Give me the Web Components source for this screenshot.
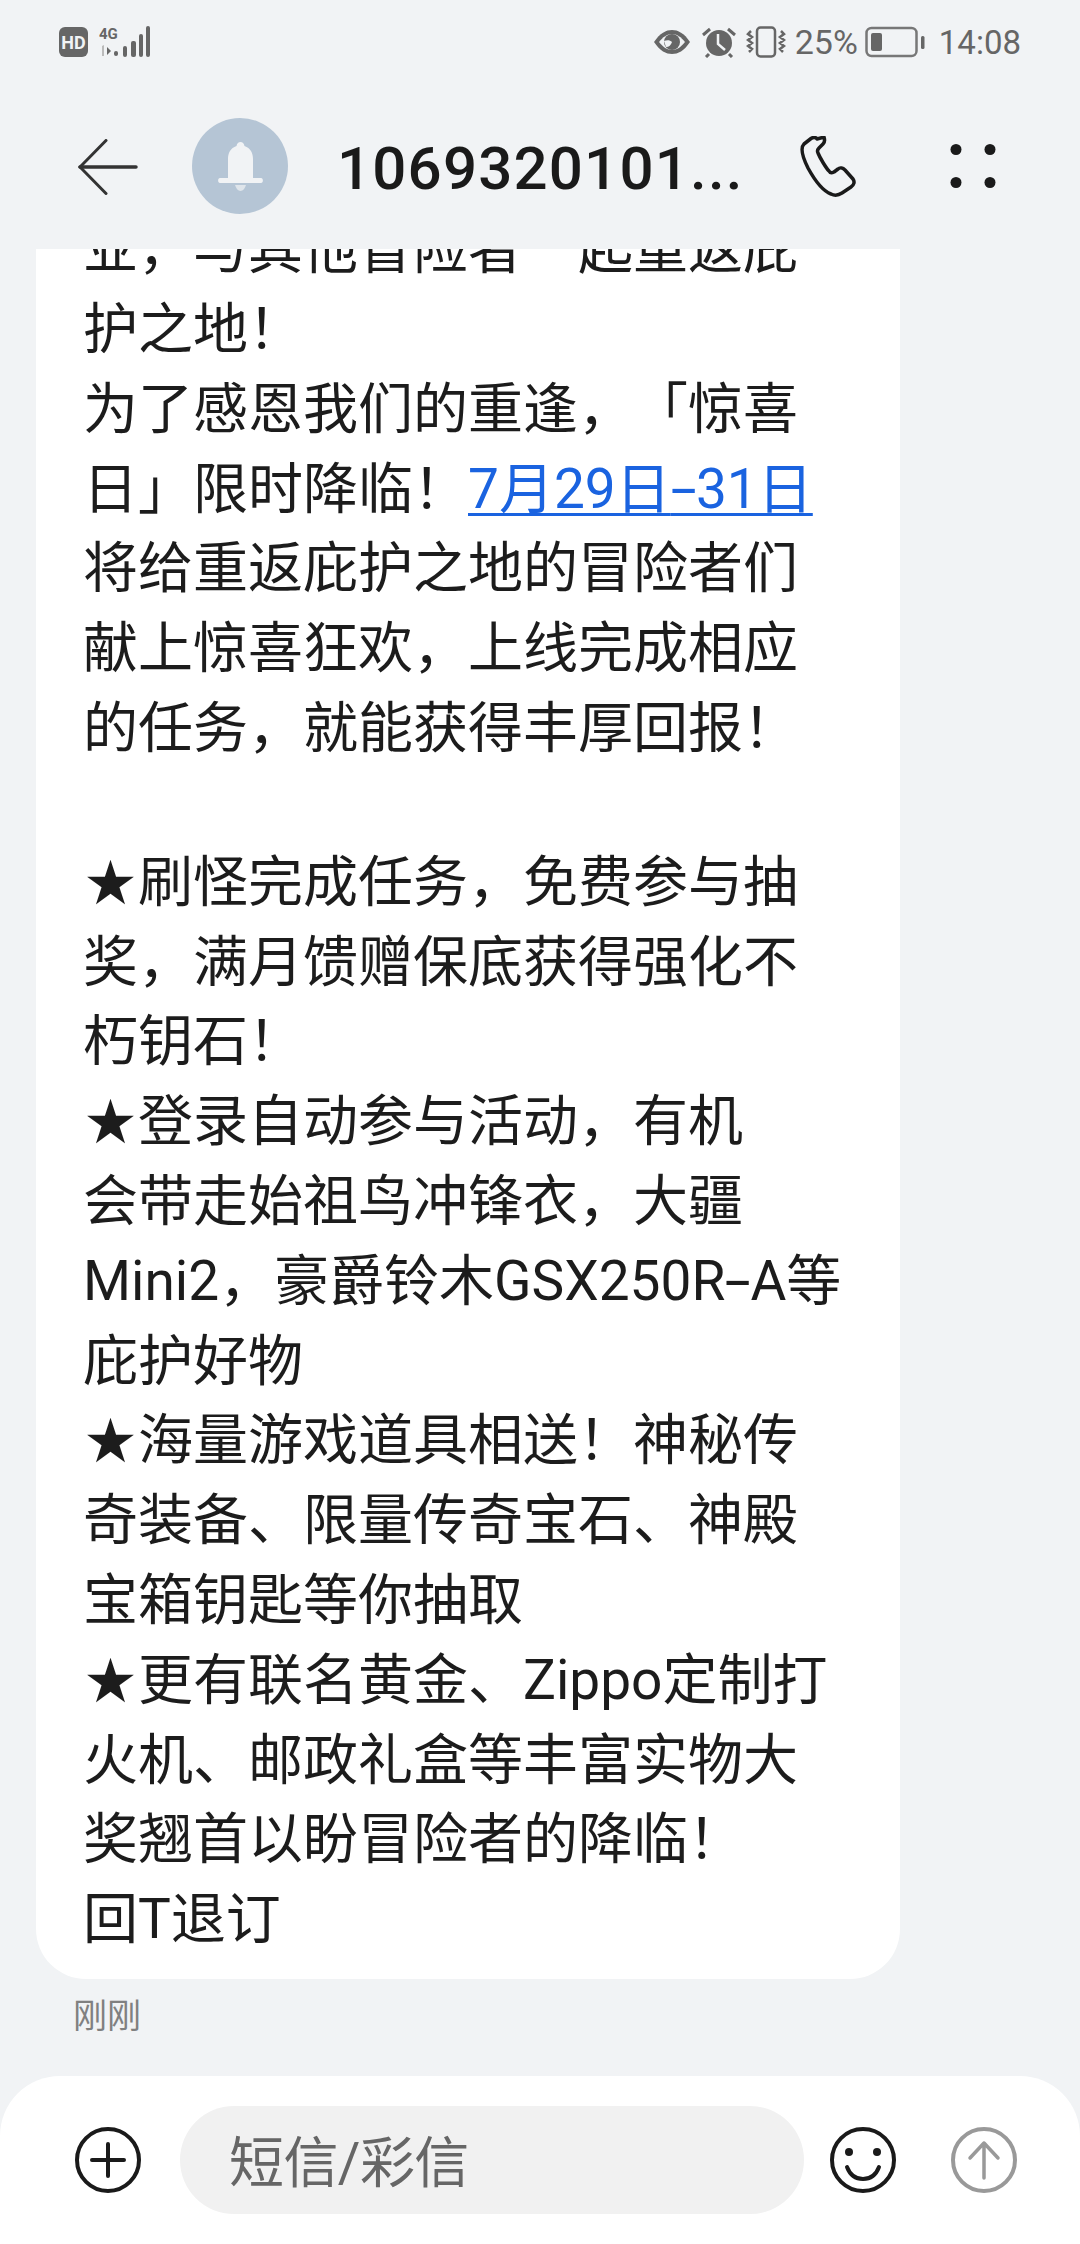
<!DOCTYPE html>
<html lang="zh">
<head>
<meta charset="utf-8">
<style>
  html, body { margin: 0; padding: 0; }
  body { width: 1080px; height: 2244px; background: #f1f3f5; overflow: hidden; }
  #app { display: flex; flex-direction: column; height: 2244px; }
  sms-bubble a { color: #1a63e0; text-decoration: underline; text-underline-offset: 5px; text-decoration-thickness: 3px; }
  sms-bubble .blank { display: block; height: 74px; }
  sms-bubble .star { display: inline-block; width: 55px; text-align: center; font-size: 50px; line-height: 1; }
  sms-bubble .dash { display: inline-block; margin: 0 5px; transform: scaleX(1.7); }
  sms-bubble a .dash { text-decoration: inherit; text-underline-offset: 5px; text-decoration-thickness: 3px; }
</style>
</head>
<body>
<div id="app">
  <status-bar></status-bar>
  <chat-header title="1069320101..."></chat-header>
  <message-list>
    <sms-bubble>
      业，与其他冒险者一起重返庇<br>
      护之地！<br>
      为了感恩我们的重逢，「惊喜<br>
      日」限时降临！<a>7月29日<span class="dash">-</span>31日</a><br>
      将给重返庇护之地的冒险者们<br>
      献上惊喜狂欢，上线完成相应<br>
      的任务，就能获得丰厚回报！<br>
      <span class="blank"></span>
      <span class="star">★</span>刷怪完成任务，免费参与抽<br>
      奖，满月馈赠保底获得强化不<br>
      朽钥石！<br>
      <span class="star">★</span>登录自动参与活动，有机<br>
      会带走始祖鸟冲锋衣，大疆<br>
      Mini2，豪爵铃木GSX250R<span class="dash">-</span>A等<br>
      庇护好物<br>
      <span class="star">★</span>海量游戏道具相送！神秘传<br>
      奇装备、限量传奇宝石、神殿<br>
      宝箱钥匙等你抽取<br>
      <span class="star">★</span>更有联名黄金、Zippo定制打<br>
      火机、邮政礼盒等丰富实物大<br>
      奖翘首以盼冒险者的降临！<br>
      回T退订
    </sms-bubble>
    <time-stamp>刚刚</time-stamp>
  </message-list>
  <compose-bar placeholder="短信/彩信"></compose-bar>
</div>

<script>
const FONT = `Roboto, "Noto Sans CJK SC", sans-serif`;

class StatusBar extends HTMLElement {
  constructor() {
    super();
    const shadowRoot = this.attachShadow({mode: 'open'});
    shadowRoot.innerHTML = `
      <style>
        :host {
          display: flex;
          justify-content: space-between;
          align-items: center;
          height: 84px;
          padding: 0 59px 0 59px;
          color: #666;
          font-family: ${FONT};
          flex: none;
        }
        .left, .right { display: flex; align-items: center; }
        .left { gap: 11px; }
        .right { font-size: 34px; }
        .time { font-size: 33px; }
        svg { display: block; }
      </style>
      <div class="left">
        <svg width="29" height="30" viewBox="0 0 29 30">
          <rect width="29" height="30" rx="6" fill="#666"/>
          <text x="14.5" y="21.5" text-anchor="middle" font-family="Roboto" font-weight="700" font-size="18" fill="#f1f3f5">HD</text>
        </svg>
        <svg width="52" height="32" viewBox="0 0 52 32">
          <text x="0" y="13" font-family="Roboto" font-weight="700" font-size="15" fill="#666">4G</text>
          <path d="M3 20l2-1v11H3z" fill="#bbb"/>
          <path d="M8 21l4 4-4 4z" fill="#666"/>
          <g fill="#666">
            <rect x="15" y="25" width="4" height="5" rx="2"/>
            <rect x="24" y="20" width="4" height="11" rx="2"/>
            <rect x="32" y="15" width="5" height="16" rx="2"/>
            <rect x="40" y="8" width="4" height="23" rx="2"/>
            <rect x="47" y="0" width="4" height="31" rx="2"/>
          </g>
        </svg>
      </div>
      <div class="right">
        <svg width="38" height="26" viewBox="0 0 38 26" style="margin-right:11px">
          <path d="M1 13C7 4 13 1 19 1s12 3 18 12c-6 9-12 12-18 12S7 22 1 13z" fill="#666"/>
          <path d="M6 13c4-5 8-8 13-8s9 3 13 8c-4 5-8 8-13 8s-9-3-13-8z" fill="#f1f3f5"/>
          <circle cx="19" cy="13" r="8" fill="#666"/>
          <path d="M11 12c3-1 6-1 8 1-1 3-3 5-6 5z" fill="#f1f3f5"/>
        </svg>
        <svg width="34" height="32" viewBox="0 0 34 32" style="margin-right:10px">
          <circle cx="17" cy="17" r="13" fill="#666"/>
          <path d="M16 8v10l7 6" fill="none" stroke="#f1f3f5" stroke-width="2.5"/>
          <path d="M1 9l7-6M33 9l-7-6M7 28l-3 3M27 28l3 3" stroke="#666" stroke-width="3"/>
        </svg>
        <svg width="40" height="32" viewBox="0 0 40 32" style="margin-right:9px">
          <rect x="11" y="1.5" width="18" height="29" rx="3.5" fill="none" stroke="#666" stroke-width="2.5"/>
          <path d="M5 5l-3 3 4 3-4 3 4 3-4 3 4 3-3 3M35 5l3 3-4 3 4 3-4 3 4 3-4 3 3 3" fill="none" stroke="#666" stroke-width="2.5"/>
        </svg>
        <span>25%</span>
        <svg width="60" height="32" viewBox="0 0 60 32" style="margin:0 14px 0 7px">
          <rect x="1.5" y="2" width="50" height="28" rx="5" fill="none" stroke="#777" stroke-width="2.5"/>
          <rect x="6" y="7" width="11" height="18" rx="2" fill="#666"/>
          <rect x="56" y="10" width="3.5" height="13" rx="1.5" fill="#666"/>
        </svg>
        <span class="time">14:08</span>
      </div>
    `;
  }
}

class ChatHeader extends HTMLElement {
  constructor() {
    super();
    const shadowRoot = this.attachShadow({mode: 'open'});
    shadowRoot.innerHTML = `
      <style>
        :host {
          display: flex;
          align-items: center;
          height: 165px;
          padding-left: 78px;
          box-sizing: border-box;
          flex: none;
        }
        .avatar {
          width: 96px;
          height: 96px;
          border-radius: 50%;
          background: #b5c5d5;
          display: flex;
          align-items: center;
          justify-content: center;
          margin-left: 54px;
          margin-top: -1px;
        }
        h1 {
          margin: 4px 0 0 49px;
          width: 443px;
          font: 500 60px/1 ${FONT};
          color: #1a1a1a;
          white-space: nowrap;
          letter-spacing: 1.2px;
        }
        svg { display: block; flex: none; }
      </style>
      <svg width="60" height="56" viewBox="0 0 60 56">
        <path d="M28 1.5L2 28l26 26.5" fill="none" stroke="#333" stroke-width="3" stroke-linecap="round"/>
        <path d="M2 28h56" stroke="#333" stroke-width="3.5" stroke-linecap="round"/>
      </svg>
      <div class="avatar">
        <svg width="45" height="49" viewBox="0 0 45 49">
          <path d="M22.500 0c2 0 3.500 1.500 4 4 6 2 8.500 7 8.500 13v19l8 0c2.500 0 2.500 5 0 5H2c-2.500 0-2.500-5 0-5h8V17c0-6 2.500-11 8.500-13 .5-2.500 2-4 4-4z" fill="#f1f3f5"/>
          <path d="M17 43h11c-1 3-3 6-5.500 6S18 46 17 43z" fill="#dfe5eb"/>
        </svg>
      </div>
      <h1></h1>
      <svg width="60" height="62" viewBox="0 0 60 62" style="margin-left:20px">
        <path d="M11 2.500L4 8c-4 4-1 14 4 24 6 11 15 23 23 26 4 2 8 1 11-1l9-6c3-2 4-5 2-8l-8-9c-2-2-5-3-7-1l-4 3c-2 1-4 1-5-1-3-3-9-13-11-18-1-2-1-3 1-5l4-4c2-2 2-4 1-7L17 3c-1-2-4-2-6-.5z" fill="none" stroke="#1a1a1a" stroke-width="3.500" stroke-linejoin="round"/>
      </svg>
      <svg width="46" height="44" viewBox="0 0 46 44" style="margin:-1px 0 0 90px">
        <g fill="#1a1a1a">
          <circle cx="6" cy="5.500" r="5.500"/><circle cx="40" cy="5.500" r="5.500"/>
          <circle cx="6" cy="38.500" r="5.500"/><circle cx="40" cy="38.500" r="5.500"/>
        </g>
      </svg>
    `;
    shadowRoot.querySelector('h1').textContent = this.getAttribute('title');
  }
}

class MessageList extends HTMLElement {
  constructor() {
    super();
    const shadowRoot = this.attachShadow({mode: 'open'});
    shadowRoot.innerHTML = `
      <style>
        :host {
          display: flex;
          flex-direction: column;
          justify-content: flex-end;
          flex: 1;
          min-height: 0;
          overflow: hidden;
        }
      </style>
      <slot></slot>
    `;
  }
}

class SmsBubble extends HTMLElement {
  constructor() {
    super();
    const shadowRoot = this.attachShadow({mode: 'open'});
    shadowRoot.innerHTML = `
      <style>
        :host {
          display: block;
          flex: none;
          width: 864px;
          box-sizing: border-box;
          margin-left: 36px;
          padding: 0 30px 19px 47px;
          background: #fff;
          border-radius: 0 0 50px 50px;
          font: 400 55px/79.800px Roboto, "Noto Sans CJK SC", sans-serif;
          text-spacing-trim: space-all;
          color: #1c1c1c;
          white-space: nowrap;
        }
      </style>
      <slot></slot>
    `;
  }
}

class TimeStamp extends HTMLElement {
  constructor() {
    super();
    const shadowRoot = this.attachShadow({mode: 'open'});
    shadowRoot.innerHTML = `
      <style>
        :host {
          display: block;
          flex: none;
          padding: 13px 0 40px 73px;
          font: 400 34px/44px "Noto Sans CJK SC", sans-serif;
          color: #808080;
        }
      </style>
      <slot></slot>
    `;
  }
}

class ComposeBar extends HTMLElement {
  constructor() {
    super();
    const shadowRoot = this.attachShadow({mode: 'open'});
    shadowRoot.innerHTML = `
      <style>
        :host {
          display: flex;
          align-items: center;
          flex: none;
          height: 168px;
          box-sizing: border-box;
          padding: 0 63px 0 75px;
          background: #fff;
          border-radius: 60px 60px 0 0;
        }
        .field {
          flex: 1;
          height: 108px;
          margin: 0 26px 0 39px;
          padding-left: 49px;
          border-radius: 54px;
          background: #f1f1f1;
          color: #666;
          font: 400 55px/114px Roboto, "Noto Sans CJK SC", sans-serif;
          letter-spacing: -0.6px;
        }
        svg { display: block; flex: none; }
      </style>
      <svg width="66" height="66" viewBox="0 0 66 66">
        <circle cx="33" cy="33" r="31" fill="none" stroke="#1a1a1a" stroke-width="4"/>
        <path d="M33 17v32M17 33h32" stroke="#1a1a1a" stroke-width="4" stroke-linecap="round"/>
      </svg>
      <div class="field"></div>
      <svg width="66" height="66" viewBox="0 0 66 66">
        <circle cx="33" cy="33" r="31" fill="none" stroke="#1a1a1a" stroke-width="4"/>
        <circle cx="19" cy="25" r="4" fill="#1a1a1a"/><circle cx="47" cy="25" r="4" fill="#1a1a1a"/>
        <path d="M17 40c3 8 9 12 16 12s13-4 16-12" fill="none" stroke="#1a1a1a" stroke-width="4" stroke-linecap="round"/>
      </svg>
      <svg width="66" height="66" viewBox="0 0 66 66" style="margin-left:55px">
        <circle cx="33" cy="33" r="31" fill="none" stroke="#999" stroke-width="4"/>
        <path d="M33 51V16M19 31l14-15 14 15" fill="none" stroke="#999" stroke-width="3.500" stroke-linecap="round" stroke-linejoin="round"/>
      </svg>
    `;
    shadowRoot.querySelector('.field').textContent = this.getAttribute('placeholder');
  }
}

customElements.define('status-bar', StatusBar);
customElements.define('chat-header', ChatHeader);
customElements.define('message-list', MessageList);
customElements.define('sms-bubble', SmsBubble);
customElements.define('time-stamp', TimeStamp);
customElements.define('compose-bar', ComposeBar);
</script>
</body>
</html>
